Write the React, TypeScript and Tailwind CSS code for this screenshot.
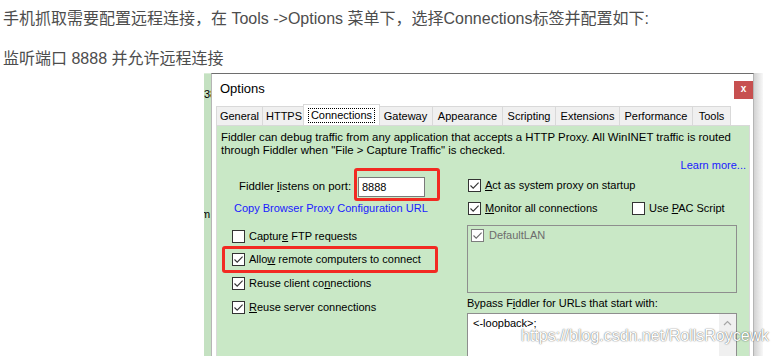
import type { ReactNode } from 'react';

const tabs: { label: string; w: string; active?: boolean; last?: boolean }[] = [
  { label: 'General', w: 'w-[46px]' },
  { label: 'HTTPS', w: 'w-[43px]' },
  { label: 'Connections', w: 'w-[77px]', active: true },
  { label: 'Gateway', w: 'w-[54px]' },
  { label: 'Appearance', w: 'w-[70px]' },
  { label: 'Scripting', w: 'w-[53px]' },
  { label: 'Extensions', w: 'w-[64px]' },
  { label: 'Performance', w: 'w-[73px]' },
  { label: 'Tools', w: 'w-[39px]', last: true },
];

function Check({ on, dim }: { on?: boolean; dim?: boolean }) {
  return (
    <span
      className={`flex h-[13px] w-[13px] shrink-0 items-center justify-center border bg-white ${
        dim ? 'border-[#7d7d7d]' : 'border-[#333333]'
      }`}
    >
      {on && (
        <svg width="11" height="11" viewBox="0 0 11 11">
          <path d="M1.5 5.5 L4.2 8.2 L9.6 2.6" fill="none" stroke={dim ? '#6a6a6a' : '#333333'} strokeWidth="1.1" />
        </svg>
      )}
    </span>
  );
}

function Row({ on, children }: { on?: boolean; children: ReactNode }) {
  return (
    <div className="flex h-[13px] items-center gap-[4px] whitespace-nowrap">
      <Check on={on} />
      <span className="leading-[13px]">{children}</span>
    </div>
  );
}

const U = ({ children }: { children: ReactNode }) => <span className="underline underline-offset-[1px]">{children}</span>;

export default function App() {
  return (
    <div className="relative h-[356px] w-[779px] overflow-hidden bg-white font-['Liberation_Sans','Noto_Sans_CJK_SC',sans-serif]">
      <p className="whitespace-nowrap pl-[3px] pt-[6px] text-[16px] leading-[26px] text-[#4d4d4d]">
        手机抓取需要配置远程连接，在 Tools -&gt;Options 菜单下，选择Connections标签并配置如下:
      </p>
      <p className="mt-[14px] whitespace-nowrap pl-[3px] text-[16px] leading-[26px] text-[#4d4d4d]">
        监听端口 8888 并允许远程连接
      </p>

      <div className="ml-[204px] mt-[1px] flex h-[283px]">
        {/* edge of the window behind */}
        <div className="w-[7px] overflow-hidden border-t border-[#d9ecd6] bg-[#c4e1c1] text-[11px] text-black">
          <div className="mt-[14px] leading-[13px]">38</div>
          <div className="-ml-[3px] mt-[107px] leading-[13px]">m</div>
        </div>

        <div className="flex w-[543px] flex-col border-x border-t border-x-[#b5b5b5] border-t-[#6e6e6e] bg-white text-[11px] text-black">
          {/* title bar */}
          <div className="flex h-[30px] shrink-0 items-start justify-between">
            <span className="mt-[7px] pl-[8px] text-[13px] leading-[16px]">Options</span>
            <span className="mt-[7px] flex h-[18px] w-[19px] items-center justify-center bg-[#c75050] pb-[2px] text-[10px] font-bold leading-[10px] text-white">
              x
            </span>
          </div>

          {/* tabs */}
          <div className="flex h-[21px] shrink-0 items-end pl-[4px]">
            {tabs.map((t) =>
              t.active ? (
                <div
                  key={t.label}
                  className={`relative z-10 -mx-[2px] flex h-[21px] ${t.w} items-center justify-center border-x border-t border-[#d9d9d9] bg-white`}
                >
                  <span className="border border-dotted border-black px-[2px] leading-[13px]">{t.label}</span>
                </div>
              ) : (
                <div
                  key={t.label}
                  className={`flex h-[19px] ${t.w} items-center justify-center border-l border-t border-[#d9d9d9] bg-[#f0f0f0] ${
                    t.last ? 'border-r' : ''
                  }`}
                >
                  {t.label}
                </div>
              )
            )}
          </div>

          {/* panel */}
          <div className="flex flex-1 pl-[4px] pr-[3px]">
            <div className="flex-1 border border-b-0 border-[#d9d9d9] bg-[#c9e8c6] pt-[5px]">
              <div className="whitespace-nowrap pl-[4px] text-[11.4px] leading-[13px]">
                Fiddler can debug traffic from any application that accepts a HTTP Proxy. All WinINET traffic is routed
                <br />
                through Fiddler when "File &gt; Capture Traffic" is checked.
              </div>
              <div className="mt-[2px] pr-[3px] text-right leading-[13px] text-[#1a1aff]">Learn more...</div>

              <div className="-mt-[4px] flex">
                {/* left column */}
                <div className="w-[250px]">
                  <div className="flex h-[33px] items-center">
                    <span className="ml-[22px] mt-[3px] w-[115px] whitespace-nowrap text-[11.4px] leading-[13px]">
                      Fiddler <U>l</U>istens on port:
                    </span>
                    <div className="h-[33px] w-[86px] rounded-[3px] border-[3px] border-[#f22a22] pl-[1px] pt-[6px]">
                      <div className="h-[20px] w-[67px] border border-[#7a7a7a] bg-white pl-[3px] leading-[18px]">8888</div>
                    </div>
                  </div>
                  <div className="ml-[17px] mt-[1px] whitespace-nowrap leading-[13px] text-[#1a1aff]">
                    Copy Browser Proxy Configuration URL
                  </div>
                  <div className="ml-[15px] mt-[15px]">
                    <Row>
                      Captur<U>e</U> FTP requests
                    </Row>
                  </div>
                  <div className="ml-[5px] mt-[3px] w-[216px] rounded-[3px] border-[3px] border-[#f22a22] py-[4px] pl-[7px]">
                    <Row on>
                      Allo<U>w</U> remote computers to connect
                    </Row>
                  </div>
                  <div className="ml-[15px] mt-[4px]">
                    <Row on>
                      Reuse client co<U>n</U>nections
                    </Row>
                  </div>
                  <div className="ml-[15px] mt-[11px]">
                    <Row on>
                      <U>R</U>euse server connections
                    </Row>
                  </div>
                </div>

                {/* right column */}
                <div className="w-[270px]">
                  <div className="ml-[1px] mt-[11px]">
                    <Row on>
                      <U>A</U>ct as system proxy on startup
                    </Row>
                  </div>
                  <div className="ml-[1px] mt-[10px] flex">
                    <div className="w-[164px]">
                      <Row on>
                        <U>M</U>onitor all connections
                      </Row>
                    </div>
                    <Row>
                      Use <U>P</U>AC Script
                    </Row>
                  </div>
                  <div className="mt-[10px] h-[68px] border border-[#8e8e8e] pl-[3px] pt-[3px]">
                    <div className="flex items-center gap-[5px] text-[#6d6d6d]">
                      <Check on dim />
                      <span className="leading-[13px]">DefaultLAN</span>
                    </div>
                  </div>
                  <div className="mt-[4px] whitespace-nowrap leading-[13px]">
                    Bypass F<U>i</U>ddler for URLs that start with:
                  </div>
                  <div className="mt-[3px] flex h-[50px] border border-b-0 border-[#8e8e8e] bg-white">
                    <div className="flex-1 pl-[5px] pt-[3px] leading-[13px]">&lt;-loopback&gt;;</div>
                    <div className="flex w-[17px] justify-center bg-[#f0f0f0] pt-[6px]">
                      <svg width="9" height="6" viewBox="0 0 9 6">
                        <path d="M1 5 L4.5 1.5 L8 5" fill="none" stroke="#a6a6a6" strokeWidth="1.2" />
                      </svg>
                    </div>
                  </div>
                </div>
              </div>
            </div>
          </div>
        </div>

        <div className="w-[9px] bg-gradient-to-r from-[#d2d2d2] to-[#f8f8f8]" />
      </div>

      <div className="absolute left-[521px] top-[327px] whitespace-nowrap text-[16px] leading-[18px] text-white [text-shadow:0_0_1px_rgba(0,0,0,0.6),0_0_2px_rgba(0,0,0,0.3)]">
        https://blog.csdn.net/RollsRoycewk
      </div>
    </div>
  );
}
